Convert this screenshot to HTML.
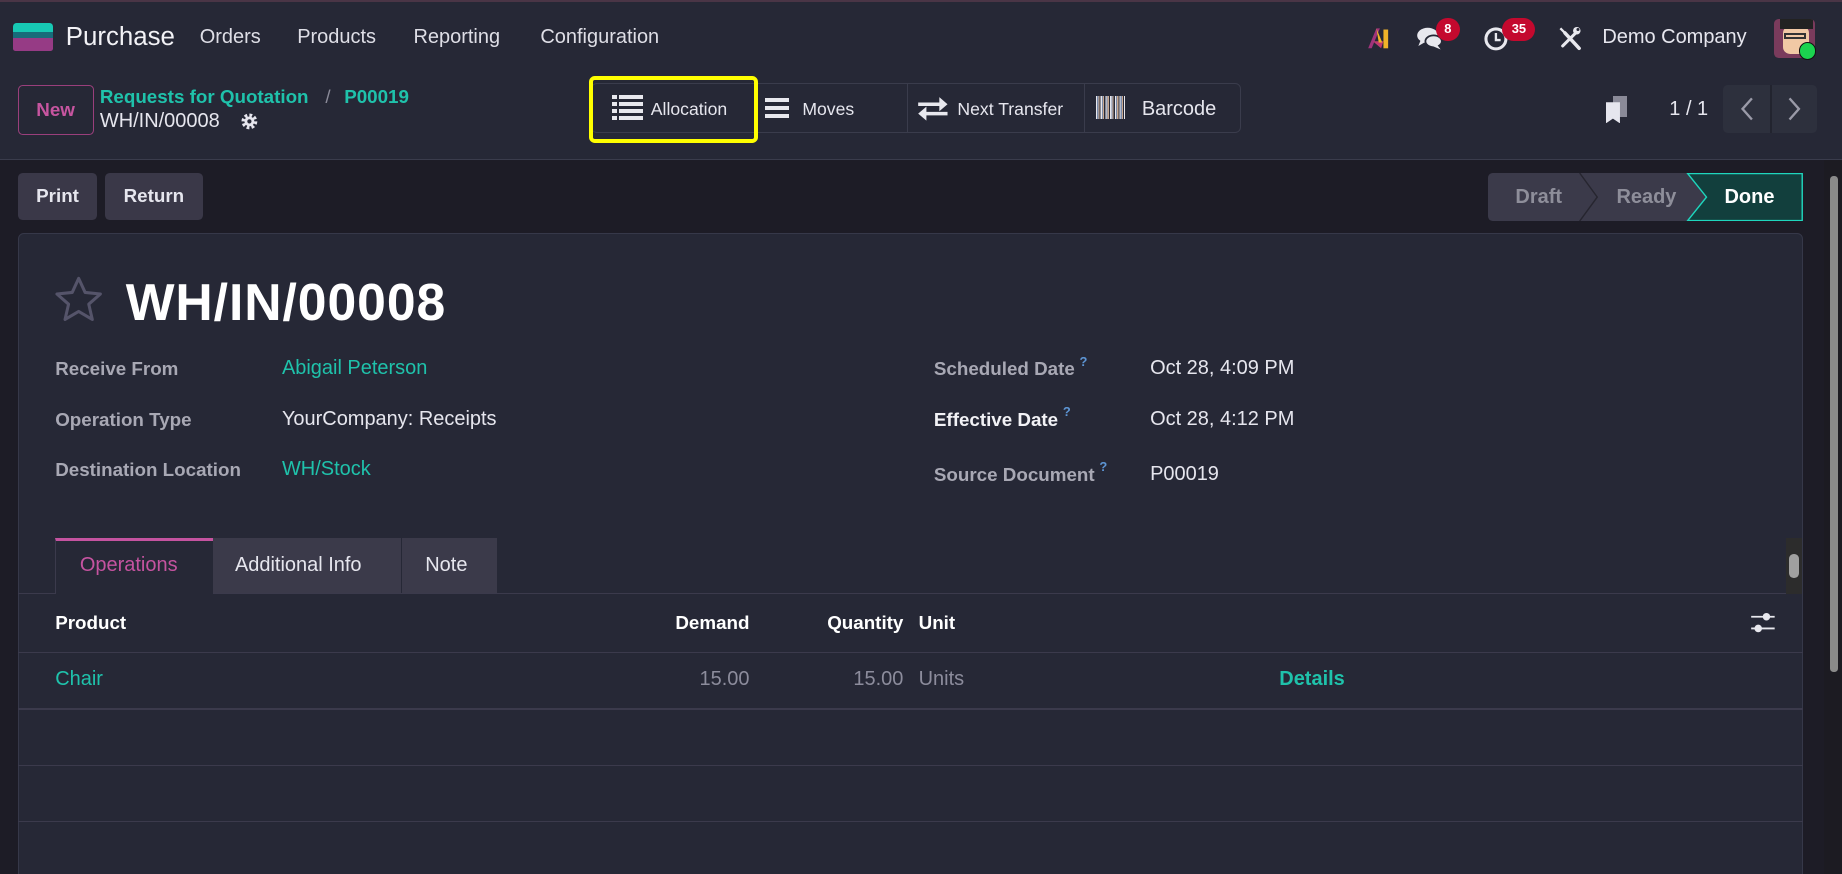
<!DOCTYPE html>
<html><head><meta charset="utf-8">
<style>
html,body{margin:0;padding:0;background:#1d1c26;overflow:hidden;width:1842px;height:874px}
#w{zoom:1.17474;width:1568px;height:744px;position:relative;overflow:hidden;font-family:"Liberation Sans",sans-serif;color:#e4e4ea;background:#1d1c26}
.a{position:absolute;white-space:nowrap}
.t{font-size:16px;line-height:20px}
.teal{color:#1fc2ab}
.lbl{color:#a8a8b4;font-weight:bold;font-size:16px;line-height:20px}
.q{color:#5d95d4;font-size:11px;position:relative;top:-8px;margin-left:4px;font-weight:bold}
.btn{position:absolute;background:#3a3848;border-radius:4px;font-weight:bold;font-size:16px;color:#e6e6ee;text-align:center}
.bar{position:absolute;height:3px;background:#e8e8ee}
.line{position:absolute;left:15px;width:1520px;height:1px;background:#3b3a4c}
</style></head><body><div id="w">
<div class="a" style="left:0;top:0;width:1568px;height:135px;background:#262836;border-bottom:1px solid #3a3c4c"></div>
<div class="a" style="left:0;top:0;width:1568px;height:2px;background:#4a3546"></div>
<div class="a" style="left:11px;top:20px;width:34px;height:7px;background:#17c9b4;border-radius:3px 3px 0 0"></div>
<div class="a" style="left:11px;top:27px;width:34px;height:5px;background:#176c7a"></div>
<div class="a" style="left:11px;top:32px;width:34px;height:11px;background:#963b85;border-radius:0 0 2px 2px"></div>
<div class="a" style="left:56px;top:18px;font-size:22px;line-height:28px;color:#f2f2f6">Purchase</div>
<div class="a" style="left:170px;top:22px;font-size:17px;line-height:20px;color:#dedee6">Orders</div>
<div class="a" style="left:253px;top:22px;font-size:17px;line-height:20px;color:#dedee6">Products</div>
<div class="a" style="left:352px;top:22px;font-size:17px;line-height:20px;color:#dedee6">Reporting</div>
<div class="a" style="left:460px;top:22px;font-size:17px;line-height:20px;color:#dedee6">Configuration</div>
<svg class="a" style="left:1164px;top:22px" width="24" height="20" viewBox="0 0 24 20"><path d="M1 19 L8 2 L11 2 L4 19Z" fill="#a0337a"/><path d="M5 13 L14 13 L12 19 Z" fill="#c03a70"/><rect x="14" y="3" width="4" height="16" fill="#f0b429"/><path d="M8 2 L13 14 L10 14 Z" fill="#f0b429"/></svg>
<svg class="a" style="left:1205px;top:22px" width="24" height="22" viewBox="0 0 24 22"><ellipse cx="10" cy="8" rx="9" ry="6.5" fill="#e8e8ee"/><path d="M4 12 L2 17 L9 13Z" fill="#e8e8ee"/><ellipse cx="15" cy="13" rx="7" ry="5" fill="#e8e8ee" stroke="#262836" stroke-width="1.5"/><path d="M18 16 L21 20 L14 17Z" fill="#e8e8ee"/></svg>
<div class="a" style="left:1222px;top:15px;width:21px;height:20px;border-radius:10px;background:#c4092e;color:#fff;font-size:11px;font-weight:bold;text-align:center;line-height:18px">8</div>
<svg class="a" style="left:1262px;top:22px" width="22" height="22" viewBox="0 0 22 22"><circle cx="11" cy="11" r="8.5" fill="none" stroke="#e8e8ee" stroke-width="2.6"/><path d="M11 6 V12 H15" stroke="#e8e8ee" stroke-width="2" fill="none"/></svg>
<div class="a" style="left:1279px;top:15px;width:28px;height:20px;border-radius:10px;background:#c4092e;color:#fff;font-size:11px;font-weight:bold;text-align:center;line-height:18px">35</div>
<svg class="a" style="left:1326px;top:22px" width="20" height="21" viewBox="0 0 20 21"><path d="M6 6 L18 19" stroke="#e8e8ee" stroke-width="3" stroke-linecap="round"/><path d="M2 2 L6 6" stroke="#e8e8ee" stroke-width="2"/><path d="M17 4 L4 17" stroke="#e8e8ee" stroke-width="2.6" stroke-linecap="round"/><circle cx="16" cy="4" r="3.2" fill="#e8e8ee"/><circle cx="17" cy="3" r="1.3" fill="#262836"/></svg>
<div class="a" style="left:1364px;top:22px;font-size:17px;line-height:20px;color:#e6e6ee">Demo Company</div>
<div class="a" style="left:1510px;top:16px;width:35px;height:33px;border-radius:4px;background:#7a3b5c;overflow:hidden"><div style="position:absolute;left:8px;top:6px;width:22px;height:24px;background:#f1c9a5;border-radius:6px"></div><div style="position:absolute;left:5px;top:0;width:28px;height:9px;background:#222"></div><div style="position:absolute;left:9px;top:12px;width:18px;height:5px;border:2px solid #333;box-sizing:border-box"></div></div>
<div class="a" style="left:1531px;top:36px;width:13px;height:13px;border-radius:50%;background:#1bd34f;border:1.5px solid #111"></div>
<div class="a" style="left:15px;top:72px;width:63px;height:41px;border:1px solid #9a3f7c;border-radius:4px;color:#c755a0;font-weight:bold;font-size:16px;line-height:41px;text-align:center">New</div>
<div class="a t teal" style="left:85px;top:72px;font-weight:bold">Requests for Quotation</div>
<div class="a t" style="left:277px;top:72px;color:#8a8a98">/</div>
<div class="a t teal" style="left:293px;top:72px;font-weight:bold">P00019</div>
<div class="a t" style="left:85px;top:94px;color:#e6e6ee;font-size:17px">WH/IN/00008</div>
<svg class="a" style="left:204px;top:95px" width="16" height="16" viewBox="0 0 16 16"><circle cx="8" cy="8" r="5" fill="none" stroke="#e6e6ee" stroke-width="3.5" stroke-dasharray="2.2 1.7"/><circle cx="8" cy="8" r="4.2" fill="#e6e6ee"/><circle cx="8" cy="8" r="1.8" fill="#262836"/></svg>
<div class="a" style="left:503px;top:71px;width:553px;height:42px;border:1px solid #3a3c4c;border-radius:5px;box-sizing:border-box"></div>
<div class="a" style="left:643px;top:71px;width:1px;height:42px;background:#3a3c4c"></div>
<div class="a" style="left:772px;top:71px;width:1px;height:42px;background:#3a3c4c"></div>
<div class="a" style="left:923px;top:71px;width:1px;height:42px;background:#3a3c4c"></div>
<div class="a" style="left:501px;top:65px;width:144px;height:57px;border:4px solid #ffff00;border-radius:5px;box-sizing:border-box"></div>
<div class="bar" style="left:521px;top:81px;width:4px"></div><div class="bar" style="left:527px;top:81px;width:20px"></div>
<div class="bar" style="left:521px;top:87px;width:4px"></div><div class="bar" style="left:527px;top:87px;width:20px"></div>
<div class="bar" style="left:521px;top:93px;width:4px"></div><div class="bar" style="left:527px;top:93px;width:20px"></div>
<div class="bar" style="left:521px;top:99px;width:4px"></div><div class="bar" style="left:527px;top:99px;width:20px"></div>
<div class="a" style="left:554px;top:84px;font-size:15px;line-height:18px;color:#e6e6ee">Allocation</div>
<div class="bar" style="left:651px;top:83px;width:21px;height:3.5px"></div><div class="bar" style="left:651px;top:90px;width:21px;height:3.5px"></div><div class="bar" style="left:651px;top:97px;width:21px;height:3.5px"></div>
<div class="a" style="left:683px;top:84px;font-size:15px;line-height:18px;color:#e6e6ee">Moves</div>
<svg class="a" style="left:781px;top:82px" width="27" height="22" viewBox="0 0 27 22"><path d="M1 7 H22" stroke="#e8e8ee" stroke-width="3"/><path d="M19 1 L26 7 L19 13Z" fill="#e8e8ee"/><path d="M5 15 H26" stroke="#e8e8ee" stroke-width="3"/><path d="M8 9 L1 15 L8 21Z" fill="#e8e8ee"/></svg>
<div class="a" style="left:815px;top:84px;font-size:15px;line-height:18px;color:#e6e6ee">Next Transfer</div>
<div class="a" style="left:933px;top:82px;width:25px;height:19px;background:repeating-linear-gradient(90deg,#e8e8ee 0 1px,#7a8aa8 1px 2px,#c8a890 2px 3px,#262836 3px 4px)"></div>
<div class="a" style="left:972px;top:83px;font-size:17px;line-height:20px;color:#e6e6ee">Barcode</div>
<div class="a" style="left:1373px;top:82px;width:12px;height:18px;background:#8a8a98"></div>
<div class="a" style="left:1367px;top:87px;width:12px;height:18px;background:#e6e6ee;clip-path:polygon(0 0,100% 0,100% 100%,50% 78%,0 100%)"></div>
<div class="a" style="left:1421px;top:83px;font-size:17px;line-height:20px;color:#e6e6ee">1 / 1</div>
<div class="a" style="left:1467px;top:72px;width:80px;height:41px;background:#2d303d;border-radius:4px"></div>
<div class="a" style="left:1507px;top:72px;width:1px;height:41px;background:#22242f"></div>
<svg class="a" style="left:1480px;top:82px" width="14" height="22" viewBox="0 0 14 22"><path d="M11 2 L3 11 L11 20" stroke="#9a9aa8" stroke-width="2" fill="none"/></svg>
<svg class="a" style="left:1520px;top:82px" width="14" height="22" viewBox="0 0 14 22"><path d="M3 2 L11 11 L3 20" stroke="#9a9aa8" stroke-width="2" fill="none"/></svg>
<div class="btn" style="left:15px;top:147px;width:68px;height:40px;line-height:40px">Print</div>
<div class="btn" style="left:89px;top:147px;width:84px;height:40px;line-height:40px">Return</div>
<div class="a" style="left:1267px;top:147px;width:268px;height:41px;background:#3b3a4a;border-radius:4px"></div>
<svg class="a" style="left:1267px;top:147px" width="268" height="41" viewBox="0 0 268 41"><path d="M170 0.5 H267.5 V40.5 H170 L186 20.5 Z" fill="#123f3d" stroke="#1fd6bd" stroke-width="1.2"/><path d="M78 0 L93 20.5 L78 41" stroke="#26252f" stroke-width="1.2" fill="none"/></svg>
<div class="a" style="left:1290px;top:158px;font-size:17px;line-height:20px;font-weight:bold;color:#8e8e9a">Draft</div>
<div class="a" style="left:1376px;top:158px;font-size:17px;line-height:20px;font-weight:bold;color:#8e8e9a">Ready</div>
<div class="a" style="left:1468px;top:158px;font-size:17px;line-height:20px;font-weight:bold;color:#fff">Done</div>
<div class="a" style="left:15px;top:198px;width:1520px;height:560px;background:#262836;border:1px solid #363849;border-radius:5px;box-sizing:border-box"></div>
<svg class="a" style="left:46px;top:235px" width="42" height="40" viewBox="0 0 42 40"><path d="M21 2 L26.5 14 L39.5 15.3 L29.6 24 L32.6 37 L21 30.2 L9.4 37 L12.4 24 L2.5 15.3 L15.5 14 Z" fill="none" stroke="#55546a" stroke-width="2.6" stroke-linejoin="round"/></svg>
<div class="a" style="left:107px;top:232px;font-size:44px;line-height:50px;font-weight:bold;letter-spacing:0.8px;color:#fff">WH/IN/00008</div>
<div class="a lbl" style="left:47px;top:304px">Receive From</div>
<div class="a t teal" style="left:240px;top:304px;font-size:17px">Abigail Peterson</div>
<div class="a lbl" style="left:47px;top:347px">Operation Type</div>
<div class="a t" style="left:240px;top:347px;color:#e6e6ee;font-size:17px">YourCompany: Receipts</div>
<div class="a lbl" style="left:47px;top:390px">Destination Location</div>
<div class="a t teal" style="left:240px;top:390px;font-size:17px">WH/Stock</div>
<div class="a lbl" style="left:795px;top:304px">Scheduled Date<span class="q">?</span></div>
<div class="a t" style="left:979px;top:304px;color:#e6e6ee;font-size:17px">Oct 28, 4:09 PM</div>
<div class="a lbl" style="left:795px;top:347px;color:#f2f2f6">Effective Date<span class="q">?</span></div>
<div class="a t" style="left:979px;top:347px;color:#e6e6ee;font-size:17px">Oct 28, 4:12 PM</div>
<div class="a lbl" style="left:795px;top:394px">Source Document<span class="q">?</span></div>
<div class="a t" style="left:979px;top:394px;color:#e6e6ee;font-size:17px">P00019</div>
<div class="a" style="left:47px;top:458px;width:134px;height:48px;background:#262836;border-top:3px solid #c553a0;border-left:1px solid #3b3a4c;box-sizing:border-box"></div>
<div class="a t" style="left:68px;top:472px;color:#c553a0;font-size:17px">Operations</div>
<div class="a" style="left:181px;top:458px;width:160px;height:47px;background:#3b3a4a"></div>
<div class="a t" style="left:200px;top:472px;font-size:17px;color:#e6e6ee">Additional Info</div>
<div class="a" style="left:342px;top:458px;width:81px;height:47px;background:#3b3a4a"></div>
<div class="a t" style="left:362px;top:472px;font-size:17px;color:#e6e6ee">Note</div>
<div class="a" style="left:15px;top:505px;width:32px;height:1px;background:#3b3a4c"></div>
<div class="a" style="left:181px;top:505px;width:1340px;height:1px;background:#3b3a4c"></div>
<div class="a" style="left:1520px;top:458px;width:14px;height:48px;background:#2c2c2c"></div>
<div class="a" style="left:1523px;top:472px;width:8px;height:20px;border-radius:4px;background:#a0a0a0"></div>
<div class="a t" style="left:47px;top:520px;font-weight:bold;color:#fff">Product</div>
<div class="a t" style="left:538px;width:100px;text-align:right;top:520px;font-weight:bold;color:#fff">Demand</div>
<div class="a t" style="left:669px;width:100px;text-align:right;top:520px;font-weight:bold;color:#fff">Quantity</div>
<div class="a t" style="left:782px;top:520px;font-weight:bold;color:#fff">Unit</div>
<svg class="a" style="left:1490px;top:521px" width="22" height="18" viewBox="0 0 22 18"><path d="M1 4 H21 M1 14 H21" stroke="#e8e8ee" stroke-width="1.5"/><circle cx="14" cy="4" r="3.2" fill="#e8e8ee"/><circle cx="7" cy="14" r="3.2" fill="#e8e8ee"/></svg>
<div class="line" style="top:555px"></div>
<div class="a t teal" style="left:47px;top:569px;font-size:17px">Chair</div>
<div class="a t" style="left:538px;width:100px;text-align:right;top:569px;color:#8c8c9c;font-size:17px">15.00</div>
<div class="a t" style="left:669px;width:100px;text-align:right;top:569px;color:#8c8c9c;font-size:17px">15.00</div>
<div class="a t" style="left:782px;top:569px;color:#8c8c9c;font-size:17px">Units</div>
<div class="a t teal" style="left:1089px;top:569px;font-weight:bold;font-size:17px">Details</div>
<div class="line" style="top:603px"></div>
<div class="line" style="top:651px"></div>
<div class="line" style="top:699px"></div>
<div class="a" style="left:1553px;top:136px;width:15px;height:608px;background:#1c1b22"></div>
<div class="a" style="left:1558px;top:150px;width:7px;height:422px;border-radius:3px;background:#8a8a8a"></div>
</div></body></html>
